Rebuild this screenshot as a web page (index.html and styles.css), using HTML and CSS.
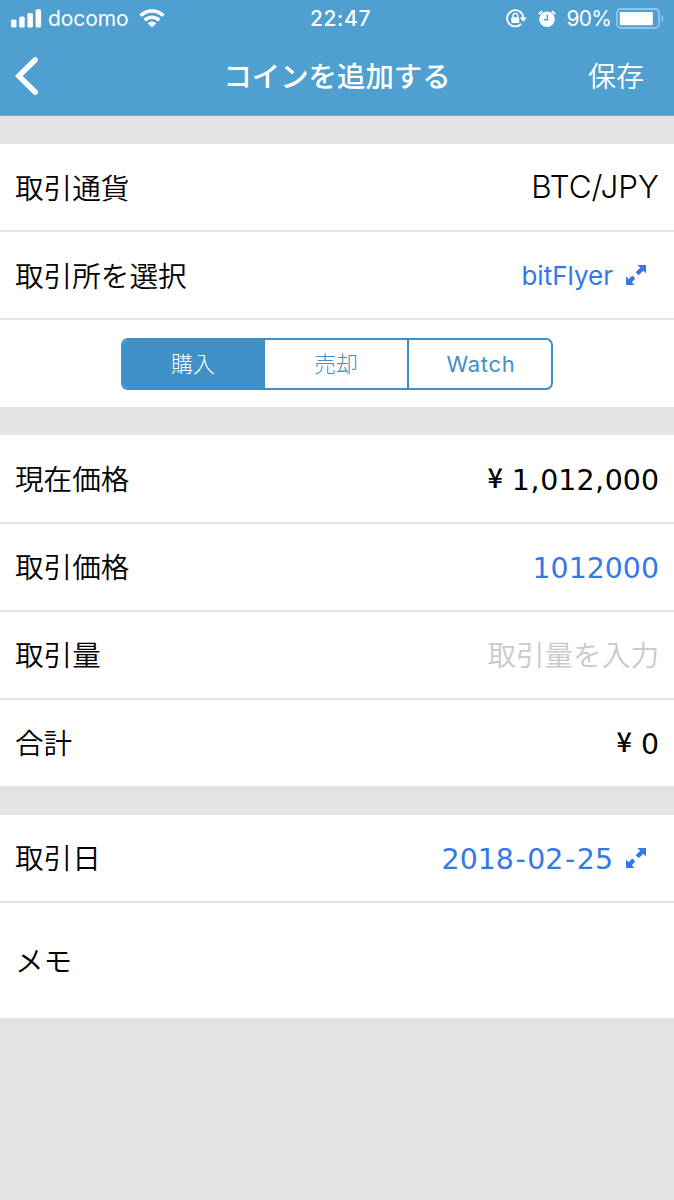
FILE: index.html
```html
<!DOCTYPE html>
<html lang="ja">
<head>
    <meta charset="UTF-8">
    <meta name="viewport" content="width=device-width, initial-scale=1.0">
    <title>コインを追加する</title>
    <link rel="stylesheet" href="styles.css">
</head>
<body>

    <header class="header">
        <!-- Status bar -->
        <div class="status-bar">
            <div class="status-left">
                <svg class="signal" width="31" height="19" viewBox="0 0 31 19" fill="#fff">
                    <rect x="0" y="10.5" width="5.5" height="8" rx="1.6"/>
                    <rect x="8.2" y="7.5" width="5.5" height="11" rx="1.6"/>
                    <rect x="16.4" y="4" width="5.5" height="14.5" rx="1.6"/>
                    <rect x="24.6" y="0.3" width="5.5" height="18.2" rx="1.6"/>
                </svg>
                <span class="carrier">docomo</span>
                <svg class="wifi" width="26" height="19" viewBox="0 0 26 19">
                    <g fill="none" stroke="#fff" stroke-width="3.6">
                        <path d="M1.6 6.8a16 16 0 0 1 22.8 0"/>
                        <path d="M5.8 11.3a10.2 10.2 0 0 1 14.4 0"/>
                    </g>
                    <path d="M13 18.6l-4.3-4.3a6.1 6.1 0 0 1 8.6 0z" fill="#fff"/>
                </svg>
            </div>
            <span class="clock">22:47</span>
            <div class="status-right">
                <svg class="lock" width="21" height="19" viewBox="0 0 21 19">
                    <path d="M15.2 14.8A8.1 8.1 0 1 1 17.3 8.8" fill="none" stroke="#fff" stroke-width="1.8"/>
                    <path d="M13.8 8.4h7l-3.5 4.4z" fill="#fff"/>
                    <rect x="5.3" y="8.3" width="8" height="5.6" rx=".8" fill="#fff"/>
                    <path d="M7 8.6V6.7a2.3 2.3 0 0 1 4.6 0v1.9" fill="none" stroke="#fff" stroke-width="1.4"/>
                </svg>
                <svg class="alarm" width="18" height="18" viewBox="0 0 18 18">
                    <circle cx="9" cy="9.3" r="7.8" fill="#fff"/>
                    <path d="M.9 4.3A9.5 9.5 0 0 1 4.2 1.1M17.1 4.3a9.5 9.5 0 0 0-3.3-3.2" fill="none" stroke="#fff" stroke-width="1.8"/>
                    <path d="M9.4 4.6v5.2H5.9" fill="none" stroke="#4f9fd0" stroke-width="1.4"/>
                </svg>
                <span class="percent">90%</span>
                <svg class="battery" width="48" height="21" viewBox="0 0 48 21">
                    <rect x="1" y="1" width="42" height="19" rx="4" fill="none" stroke="#8fc6e8" stroke-width="1.8"/>
                    <rect x="3.8" y="4" width="33" height="13.2" rx=".6" fill="#fff"/>
                    <path d="M45.2 7c3 1.2 3 5.8 0 7z" fill="#8fc6e8"/>
                </svg>
            </div>
        </div>

        <!-- Navigation -->
        <div class="nav-bar">
            <button class="back-btn" aria-label="戻る">
                <svg width="24" height="40" viewBox="0 0 24 40">
                    <path d="M21.3 3.8L4.8 20l16.5 16.2" fill="none" stroke="#fff" stroke-width="5.4" stroke-linecap="round"/>
                </svg>
            </button>
            <h1>コインを追加する</h1>
            <button class="save-btn">保存</button>
        </div>
    </header>

    <!-- Coin -->
    <section class="group">
        <div class="row">
            <label>取引通貨</label>
            <span class="value latin">BTC/JPY</span>
        </div>
        <div class="row">
            <label>取引所を選択</label>
            <span class="value latin exchange">bitFlyer</span>
            <svg class="expand" width="22" height="22" viewBox="0 0 22 22" fill="#3478e8">
                <path d="M12.5 1H21v8.5l-2.7-2.7-4.6 4.5-3-3L15.2 3.7z"/>
                <path d="M9.5 21H1v-8.5l2.7 2.7 3.6-3.6 3 3-3.5 3.7z"/>
            </svg>
        </div>
        <div class="row row-tabs">
            <div class="tabs">
                <button class="tab active">購入</button>
                <button class="tab">売却</button>
                <button class="tab">Watch</button>
            </div>
        </div>
    </section>

    <!-- Price -->
    <section class="group price">
        <div class="row">
            <label>現在価格</label>
            <span class="value number"><b class="yen">¥</b>1<i>,</i>012<i>,</i>000</span>
        </div>
        <div class="row">
            <label>取引価格</label>
            <span class="value number blue">1012000</span>
        </div>
        <div class="row">
            <label>取引量</label>
            <span class="value placeholder">取引量を入力</span>
        </div>
        <div class="row">
            <label>合計</label>
            <span class="value number"><b class="yen">¥</b>0</span>
        </div>
    </section>

    <!-- Date and memo -->
    <section class="group date">
        <div class="row">
            <label>取引日</label>
            <span class="value number blue">2018<i class="dash">-</i>02<i class="dash">-</i>25</span>
            <svg class="expand" width="22" height="22" viewBox="0 0 22 22" fill="#3478e8">
                <path d="M12.5 1H21v8.5l-2.7-2.7-4.6 4.5-3-3L15.2 3.7z"/>
                <path d="M9.5 21H1v-8.5l2.7 2.7 3.6-3.6 3 3-3.5 3.7z"/>
            </svg>
        </div>
        <div class="row row-memo">
            <label>メモ</label>
        </div>
    </section>

</body>
</html>
```
FILE: styles.css
```css
* {
    margin: 0;
    padding: 0;
    box-sizing: border-box;
}

body {
    min-height: 100vh;
    background: #e4e4e4;
    color: #000;
    font-family: "Noto Sans CJK JP", sans-serif;
    font-weight: 350;
    font-size: 28.6px;
}

svg {
    display: block;
    flex-shrink: 0;
}

button {
    background: none;
    border: none;
    color: inherit;
    font: inherit;
}

/* Header */
.header {
    height: 116px;
    background: #4f9fd0;
    border-bottom: 1px solid #7fa9c4;
    color: #fff;
}

.status-bar {
    display: grid;
    grid-template-columns: 1fr auto 1fr;
    align-items: center;
    height: 37px;
    padding: 0 10px 0 11px;
    font-family: Inter, sans-serif;
    font-size: 21px;
    font-weight: 400;
    line-height: 37px;
}

.status-left, .status-right {
    display: flex;
    align-items: center;
}

.status-right {
    justify-content: flex-end;
}

.carrier {
    margin-left: 6px;
    letter-spacing: -0.1px;
}

.wifi {
    margin-left: 11px;
}

.clock {
    padding-left: 6px;
    font-weight: 500;
    letter-spacing: 0.6px;
}

.alarm {
    margin-left: 11px;
}

.percent {
    margin-left: 11px;
    letter-spacing: -0.8px;
}

.battery {
    margin-left: 5px;
}

.nav-bar {
    display: grid;
    grid-template-columns: 1fr auto 1fr;
    align-items: center;
    height: 78px;
    padding: 0 14px;
}

.nav-bar h1 {
    font-size: 28.4px;
    font-weight: 500;
    line-height: 76px;
    padding-bottom: 2px;
}

.back-btn {
    justify-self: start;
}

.save-btn {
    justify-self: end;
    margin-right: 16px;
    padding-bottom: 2px;
    font-size: 28px;
}

/* Form rows */
.group {
    margin-top: 28px;
    background: #fff;
}

.row {
    display: flex;
    align-items: center;
    height: 88px;
    padding: 0 15px;
    border-bottom: 2px solid #e4e4e4;
    line-height: 86px;
}

.row:last-child {
    height: 87px;
    border-bottom: none;
}

.price .row:first-child {
    height: 89px;
}

.price .row:last-child {
    height: 86px;
}

.group.date {
    margin-top: 29px;
}

.row label {
    flex: 1;
}

.price label, .date label {
    padding-bottom: 2px;
    line-height: 84px;
}

.row.row-memo {
    height: 115px;
}

.latin {
    font-family: Inter, sans-serif;
    font-size: 31.4px;
    font-weight: 300;
}

.latin.exchange {
    padding-top: 2px;
    color: #3478e8;
    font-size: 26px;
    font-weight: 400;
    line-height: 84px;
}

.number {
    padding-top: 3px;
    font-family: "DejaVu Sans", sans-serif;
    font-weight: 400;
    font-size: 28.4px;
    line-height: 83px;
}

.number i {
    padding: 0 0.8px 0 0.5px;
    font-style: normal;
}

.number .dash {
    padding: 0 1.6px;
}

.blue {
    color: #3478e8;
}

.yen {
    margin-right: 9px;
    font-family: "Noto Sans CJK JP", sans-serif;
    font-size: 27px;
    font-weight: 500;
    line-height: 1;
    vertical-align: 2px;
}

.placeholder {
    padding-bottom: 2px;
    color: #c9c9ce;
    line-height: 84px;
}

.expand {
    margin: 0 12px 0 12px;
}

/* Segmented control */
.row-tabs {
    justify-content: center;
}

.tabs {
    display: flex;
    width: 432px;
    height: 52px;
    border: 2px solid #4090c8;
    border-radius: 7px;
    overflow: hidden;
    color: #4090c8;
}

.tab {
    flex: 0 0 144px;
    font-family: Inter, "Noto Sans CJK JP", sans-serif;
    font-size: 22px;
    font-weight: 300;
    line-height: 48px;
}

.tab + .tab {
    border-left: 2px solid #4090c8;
}

.tab.active {
    flex-basis: 140px;
    background: #4090c8;
    color: #fff;
}

.tab:last-child {
    padding-left: 2px;
    font-weight: 400;
    letter-spacing: 0.7px;
}
```
